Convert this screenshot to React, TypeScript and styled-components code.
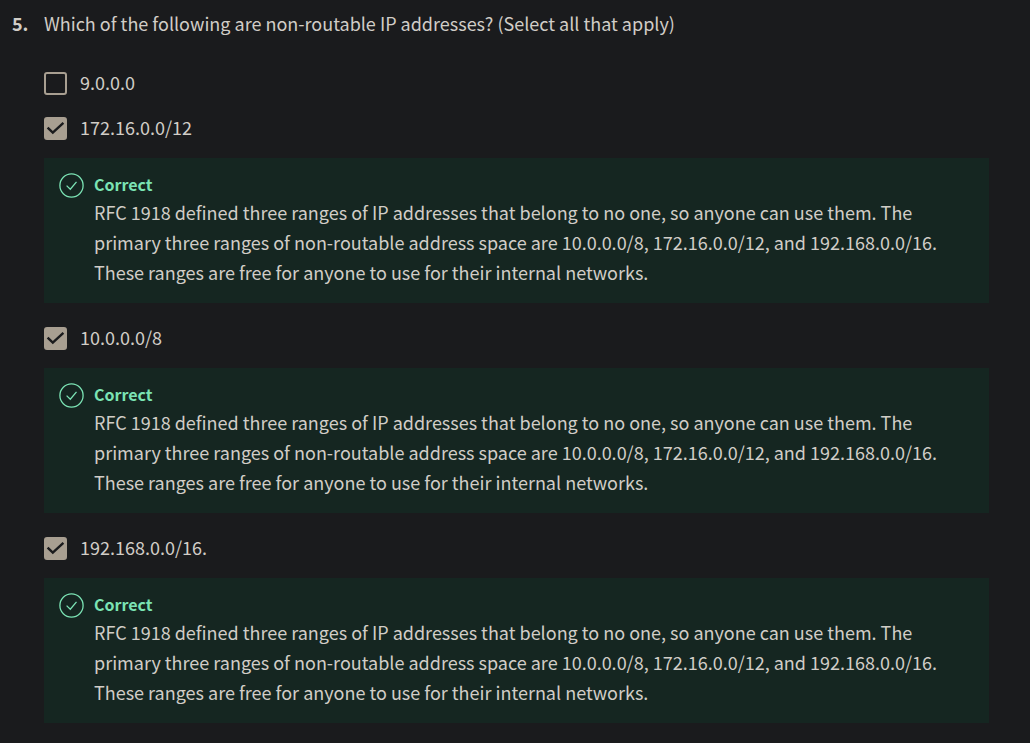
import React from "react";
import styled, { createGlobalStyle } from "styled-components";

const Global = createGlobalStyle`
  * { box-sizing: border-box; }
  body {
    margin: 0;
    background: #1a1b1d;
    color: #d1cdc7;
    font: 18px/30px "Noto Sans CJK SC", "Noto Sans", sans-serif;
  }
`;

const Question = styled.main`
  display: grid;
  grid-template-columns: 32px 1fr;
  padding: 8px 41px 19px 12px;
`;

const Num = styled.span`
  font-weight: 700;
`;

const Options = styled.fieldset`
  border: 0;
  margin: 0;
  padding: 0;
  min-width: 0;
`;

const Prompt = styled.legend`
  padding: 0;
  margin-bottom: 29px;
`;

const Option = styled.label`
  display: flex;
  align-items: center;
  gap: 13px;
  margin-bottom: 15px;
`;

const Control = styled.span`
  display: grid;
  flex: none;
  margin-top: 2px;
  > * {
    grid-area: 1 / 1;
  }
`;

const Box = styled.input`
  appearance: none;
  width: 23px;
  height: 23px;
  margin: 0;
  border: 2px solid #a89f91;
  border-radius: 3px;
  &:checked {
    background: #a89f91;
  }
  &:not(:checked) + svg {
    display: none;
  }
`;

const Tick = styled.svg`
  width: 23px;
  height: 23px;
  fill: none;
  stroke: #1a1b1d;
  stroke-width: 2.4;
  pointer-events: none;
`;

const Feedback = styled.section`
  display: flex;
  gap: 10px;
  margin: 16px 0 19px;
  padding: 13px 16px 16px 15px;
  background: #152621;
`;

const Mark = styled.svg`
  flex: none;
  width: 25px;
  height: 25px;
  margin-top: 2px;
  fill: none;
  stroke: #7be3b4;
  stroke-width: 1.3;
`;

const Title = styled.h2`
  margin: 0;
  font-size: 16px;
  line-height: 26px;
  font-weight: 700;
  color: #7be3b4;
`;

const Text = styled.p`
  margin: 0;
`;

const explanation =
  "RFC 1918 defined three ranges of IP addresses that belong to no one, so anyone can use them. The primary three ranges of non-routable address space are 10.0.0.0/8, 172.16.0.0/12, and 192.168.0.0/16. These ranges are free for anyone to use for their internal networks.";

const options = [
  { label: "9.0.0.0", correct: false },
  { label: "172.16.0.0/12", correct: true },
  { label: "10.0.0.0/8", correct: true },
  { label: "192.168.0.0/16.", correct: true },
];

export default function App() {
  return (
    <>
      <Global />
      <Question>
        <Num>5.</Num>
        <Options>
          <Prompt>Which of the following are non-routable IP addresses? (Select all that apply)</Prompt>
          {options.map((o) => (
            <React.Fragment key={o.label}>
              <Option>
                <Control>
                  <Box type="checkbox" defaultChecked={o.correct} />
                  <Tick viewBox="0 0 23 23" aria-hidden="true">
                    <path d="M3.6 10.6l5.2 5L19.4 5.8" />
                  </Tick>
                </Control>
                {o.label}
              </Option>
              {o.correct && (
                <Feedback>
                  <Mark viewBox="0 0 25 25" aria-hidden="true">
                    <circle cx="12.5" cy="12.5" r="11.6" />
                    <path d="M7.6 12.6l3.7 3.6 6.2-7.4" />
                  </Mark>
                  <div>
                    <Title>Correct</Title>
                    <Text>{explanation}</Text>
                  </div>
                </Feedback>
              )}
            </React.Fragment>
          ))}
        </Options>
      </Question>
    </>
  );
}
